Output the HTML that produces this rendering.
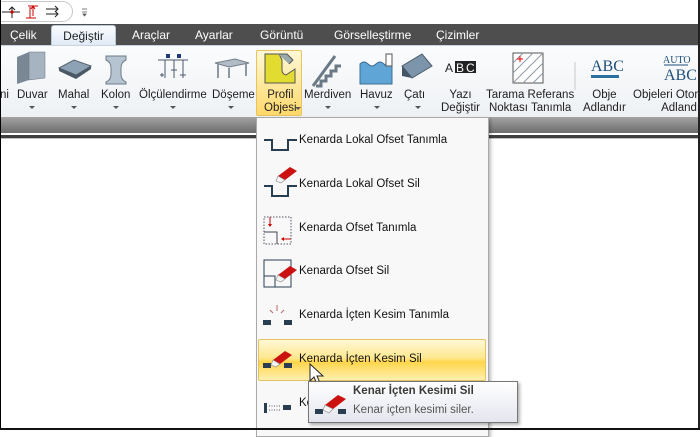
<!DOCTYPE html>
<html><head><meta charset="utf-8">
<style>
*{margin:0;padding:0;box-sizing:border-box}
body{width:700px;height:430px;overflow:hidden;background:#fff;font-family:"Liberation Sans","DejaVu Sans",sans-serif;position:relative}
.abs{position:absolute}
.qa{left:0;top:0;width:700px;height:24px;background:#fff}
.qbox{left:-10px;top:1px;width:83px;height:21px;border:1px solid #c8c8c8;border-radius:0 11px 11px 0;background:#fff}
.tabs{left:0;top:24px;width:700px;height:22px;background:#4e4e4e}
.tab{position:absolute;top:4px;color:#fff;font-size:12px}
.tabsel{left:51px;top:25px;width:65px;height:21px;background:linear-gradient(#fafcff,#dfe9f5);border:1px solid #b9c9dc;border-bottom:none;border-radius:3px 3px 0 0;color:#222;font-size:12px;text-align:center;padding-top:3px}
.rib{left:0;top:45px;width:700px;height:72px;background:linear-gradient(#fbfcfd,#eef1f4);border-top:1px solid #c8d4e2}
.lbl{position:absolute;font-size:11.5px;color:#1e1e1e;text-align:center;line-height:13px;white-space:nowrap}
.arr{position:absolute;width:0;height:0;border-left:3px solid transparent;border-right:3px solid transparent;border-top:3px solid #555}
.band{left:0;top:117px;width:700px;height:16px;background:linear-gradient(#a3a3a3,#6c6c6c)}
.line{left:0;top:135px;width:700px;height:3px;background:#3f3f3f}
.line2{left:0;top:138px;width:700px;height:1px;background:#bdbdbd}
.menu{left:256px;top:117px;width:233px;height:320px;background:#f8f8f8;border:1px solid #a9a9a9;box-shadow:2px 2px 3px rgba(0,0,0,.25)}
.mi{position:absolute;left:299px;font-size:11.5px;color:#111}
.hl{left:258px;top:339px;width:228px;height:42px;border:1px solid #e5c365;border-radius:2px;background:linear-gradient(#fff8d6 0%,#ffe88f 45%,#ffd54a 55%,#fff0b0 100%)}
.tip{left:308px;top:381px;width:210px;height:42px;background:linear-gradient(#fff,#e4e5ee);border:1px solid #767676;box-shadow:2px 2px 3px rgba(0,0,0,.3)}
</style></head><body>
<div class="abs qa"></div>
<div class="abs qbox"></div>
<svg class="abs" style="left:0;top:2px" width="90" height="20">
<path d="M2 10H20M12 5V16M9 8l3-3 3 3" stroke="#222" fill="none"/><circle cx="12" cy="10" r="1.6" fill="#c00"/>
<path d="M26 16H36M30 5V16M33 4V14M28 4H38M31 7l2-3 2 3" stroke="#c00" fill="none"/>
<path d="M46 7H58M46 12H58M55 4l3 3-3 3M55 9l3 3-3 3" stroke="#222" fill="none"/>
<path d="M82 7h5M82 10h5M83 12l1.5 2 1.5-2z" stroke="#555" fill="#555" stroke-width=".8"/>
</svg>
<div class="abs tabs"></div>
<div class="tab" style="left:10px;top:28px">Çelik</div>
<div class="abs tabsel">Değiştir</div>
<div class="tab" style="left:132px;top:28px">Araçlar</div>
<div class="tab" style="left:195px;top:28px">Ayarlar</div>
<div class="tab" style="left:260px;top:28px">Görüntü</div>
<div class="tab" style="left:334px;top:28px">Görselleştirme</div>
<div class="tab" style="left:436px;top:28px">Çizimler</div>
<div class="abs rib"></div>
<div class="abs" style="left:256px;top:50px;width:46px;height:66px;border:1px solid #e8c35f;border-radius:2px;background:linear-gradient(#fff8d8,#ffe9a0 50%,#ffd86a)"></div>
<svg class="abs" style="left:0;top:50px" width="700" height="40">
<path d="M17 7l12-5v28l-12 4z" fill="#7a8795"/><path d="M29 2l16 0v26l-16 2z" fill="#a6b3c0" stroke="#67727f" stroke-width=".5"/>
<path d="M59 18l15-8 17 6-15 9z" fill="#8ea2b6" stroke="#56636f"/><path d="M59 18v3l17 8 15-10v-3l-15 9z" fill="#4a5866"/>
<path d="M106 6h20v4q-5 2-5 8v6q0 6 5 8v2h-20v-2q5-2 5-8v-6q0-6-5-8z" fill="#b6c4d2" stroke="#6d7c8b"/>
<path d="M158 10h30M165 10v18M174 10v18M183 10v18M160 25h4M162 23v4M171 20h6M174 18v4M180 25h6M183 23v4" stroke="#4a5a6e" fill="none"/><rect x="166" y="4" width="4" height="4" fill="#1f3a7a"/><rect x="177" y="4" width="4" height="4" fill="#1f3a7a"/>
<path d="M215 13l20-4 14 4-20 4z" fill="#b2bcc6" stroke="#757f89"/><path d="M218 14v14M246 14v12M229 18v10" stroke="#8e98a2" stroke-width="2"/>
<path d="M265 4h14l3 6v10q0 4 4 5l9-6v14h-30z" fill="#e2dc30" stroke="#555"/><path d="M278 4l9 0 6 6-4 4" fill="#9aa" stroke="#555"/>
<path d="M313 36l22-30M316 36h5v-5h5v-5h5v-5h5v-5h5" stroke="#6b7886" stroke-width="3" fill="none"/>
<path d="M360 14q4-4 8 0t8 0 8 0 8 0v20h-32z" fill="#5fa6d6" stroke="#3d6f95"/><rect x="386" y="4" width="6" height="12" fill="#fff" stroke="#555"/>
<path d="M402 16l20-12 10 12-20 12z" fill="#7c95aa" stroke="#4a5b6a"/><path d="M412 28l-10-12 0 10z" fill="#445666"/>
<rect x="455" y="11" width="21" height="12" fill="#222"/><text x="445" y="22" font-size="12" font-family="Liberation Sans" fill="#222">A</text><text x="456" y="22" font-size="12" font-family="Liberation Sans" fill="#fff">B</text><text x="466" y="22" font-size="12" font-family="Liberation Sans" fill="#fff">C</text>
<rect x="513" y="3" width="30" height="30" fill="#fff" stroke="#555"/><path d="M513 13l10-10M513 23l20-20M513 33l30-30M523 33l20-20M533 33l10-10" stroke="#8c99a6"/><path d="M517 9h6M520 6v6" stroke="#e00"/>
<path d="M575 12v60" stroke="#c8c8c8"/>
<text x="591" y="21" font-size="16" font-family="Liberation Serif" fill="#1f4f7a">ABC</text><rect x="591" y="25" width="28" height="3" fill="#2b6fa0"/>
<text x="663" y="13" font-size="10" font-family="Liberation Serif" fill="#1f4f7a">AUTO</text><path d="M664 15h24" stroke="#1f4f7a"/><text x="664" y="30" font-size="16" font-family="Liberation Serif" fill="#1f4f7a">ABC</text>
</svg>
<div class="lbl" style="left:0;top:89px">ni</div>
<div class="lbl" style="left:17px;top:89px">Duvar</div><div class="arr" style="left:29px;top:106px"></div>
<div class="lbl" style="left:58px;top:89px">Mahal</div><div class="arr" style="left:71px;top:106px"></div>
<div class="lbl" style="left:101px;top:89px">Kolon</div><div class="arr" style="left:113px;top:106px"></div>
<div class="lbl" style="left:139px;top:89px">Ölçülendirme</div><div class="arr" style="left:170px;top:106px"></div>
<div class="lbl" style="left:212px;top:89px">Döşeme</div><div class="arr" style="left:228px;top:106px"></div>
<div class="lbl" style="left:264px;top:89px">Profil<br>Objesi</div><div class="arr" style="left:295px;top:107px"></div>
<div class="lbl" style="left:304px;top:89px">Merdiven</div><div class="arr" style="left:325px;top:106px"></div>
<div class="lbl" style="left:360px;top:89px">Havuz</div><div class="arr" style="left:374px;top:106px"></div>
<div class="lbl" style="left:404px;top:89px">Çatı</div><div class="arr" style="left:415px;top:106px"></div>
<div class="lbl" style="left:441px;top:89px">Yazı<br>Değiştir</div>
<div class="lbl" style="left:486px;top:89px">Tarama Referans<br>Noktası Tanımla</div>
<div class="lbl" style="left:583px;top:89px">Obje<br>Adlandır</div>
<div class="lbl" style="left:633px;top:89px;text-align:right">Objeleri Otom<br>&nbsp;&nbsp;&nbsp;Adlandır</div>
<div class="abs band"></div>
<div class="abs line"></div>
<div class="abs line2"></div>
<div class="abs menu"></div>
<div class="abs hl"></div>
<svg class="abs" style="left:258px;top:120px" width="50" height="310">
<path d="M6 20h8v10h16v-10h9" stroke="#2a3e52" stroke-width="2" fill="none"/>
<path d="M6 66h8v10h16v-10h9" stroke="#2a3e52" stroke-width="2" fill="none"/><path d="M20 56l12-9 7 4-12 9z" fill="#c11"/><path d="M20 56l7 4-4 3-5-2z" fill="#f4f4f4" stroke="#888" stroke-width=".6"/>
<rect x="6" y="97" width="27" height="27" fill="none" stroke="#556" stroke-dasharray="1.5 1.5"/><path d="M6 112h13v12" stroke="#445" fill="none"/><path d="M12 97v8M33 119h-7" stroke="#c00"/><path d="M10 104l2 3 2-3zM26 117l-3 2 3 2z" fill="#c00"/>
<rect x="6" y="140" width="27" height="27" fill="none" stroke="#2a3e52"/><path d="M6 156h11v11" stroke="#2a3e52" fill="none"/><path d="M20 155l12-9 7 4-12 9z" fill="#c11"/><path d="M20 155l7 4-4 3-5-2z" fill="#f4f4f4" stroke="#888" stroke-width=".6"/>
<rect x="5" y="200" width="8" height="5" fill="#2a3e52"/><rect x="26" y="200" width="8" height="5" fill="#2a3e52"/><path d="M19 185v6M12 190l3 3M26 190l-3 3" stroke="#b66"/>
<rect x="5" y="243" width="8" height="5" fill="#2a3e52"/><rect x="26" y="243" width="8" height="5" fill="#2a3e52"/><path d="M15 240l12-9 7 4-12 9z" fill="#c11"/><path d="M15 240l7 4-4 3-5-2z" fill="#f4f4f4" stroke="#888" stroke-width=".6"/>
<rect x="6" y="283" width="3" height="10" fill="#2a3e52"/><path d="M11 286h12M11 290h12" stroke="#556" stroke-dasharray="1 1.5"/><rect x="25" y="285" width="8" height="5" fill="#2a3e52"/>
</svg>
<div class="mi" style="top:134px">Kenarda Lokal Ofset Tanımla</div>
<div class="mi" style="top:178px">Kenarda Lokal Ofset Sil</div>
<div class="mi" style="top:222px">Kenarda Ofset Tanımla</div>
<div class="mi" style="top:265px">Kenarda Ofset Sil</div>
<div class="mi" style="top:309px">Kenarda İçten Kesim Tanımla</div>
<div class="mi" style="top:353px">Kenarda İçten Kesim Sil</div>
<div class="mi" style="top:397px">Ke</div>
<svg class="abs" style="left:308px;top:362px" width="20" height="24"><path d="M2 2v17l4-4 3 7 3-1-3-7h6z" fill="#fff" stroke="#222"/></svg>
<div class="abs tip"></div>
<svg class="abs" style="left:314px;top:384px" width="40" height="36">
<rect x="1" y="25" width="8" height="5" fill="#2a3e52"/><rect x="24" y="25" width="8" height="5" fill="#2a3e52"/><path d="M11 21l13-10 8 4-13 10z" fill="#c11"/><path d="M11 21l8 4-4 4-6-3z" fill="#f4f4f4" stroke="#888" stroke-width=".6"/>
</svg>
<div class="abs" style="left:353px;top:385px;font-size:11.5px;font-weight:bold;color:#3a3a3a">Kenar İçten Kesimi Sil</div>
<div class="abs" style="left:353px;top:404px;font-size:11.5px;color:#555">Kenar içten kesimi siler.</div>
<div class="abs" style="left:0;top:0;width:1px;height:430px;background:#000"></div>
<div class="abs" style="left:698px;top:0;width:2px;height:430px;background:#222"></div>
<div class="abs" style="left:0;top:428px;width:700px;height:2px;background:#111"></div>
</body></html>
